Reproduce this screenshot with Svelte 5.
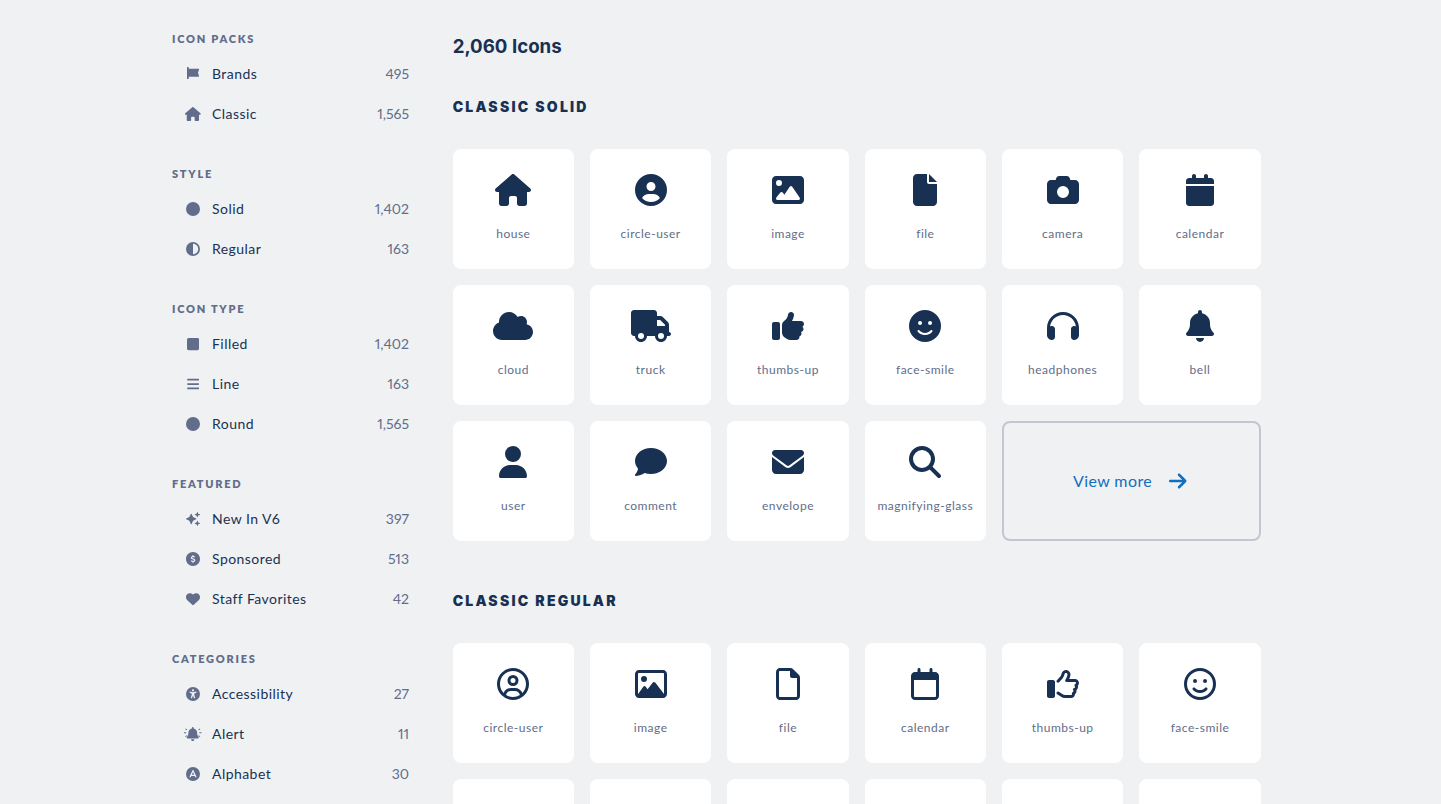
<script>
	const paths = {
		house: [576, 'M575.8 255.5c0 18-15 32.1-32 32.1h-32l.7 160.2c0 2.7-.2 5.4-.5 8.1V472c0 22.1-17.9 40-40 40H456c-1.1 0-2.2 0-3.3-.1c-1.4 .1-2.8 .1-4.2 .1H416 392c-22.1 0-40-17.9-40-40V448 384c0-17.7-14.3-32-32-32H256c-17.7 0-32 14.3-32 32v64 24c0 22.1-17.9 40-40 40H160 128.1c-1.5 0-3-.1-4.5-.2c-1.2 .1-2.4 .2-3.6 .2H104c-22.1 0-40-17.9-40-40V360c0-.9 0-1.9 .1-2.8V287.6H32c-18 0-32-14-32-32.1c0-9 3-17 10-24L266.4 8c7-7 15-8 22-8s15 2 21 7L564.8 231.5c8 7 12 15 11 24z'],
		circleUser: [512, 'M399 384.2C376.9 345.8 335.4 320 288 320H224c-47.4 0-88.9 25.8-111 64.2c35.2 39.2 86.2 63.8 143 63.8s107.8-24.7 143-63.8zM0 256a256 256 0 1 1 512 0A256 256 0 1 1 0 256zm256 16a72 72 0 1 0 0-144 72 72 0 1 0 0 144z'],
		image: [512, 'M0 96C0 60.7 28.7 32 64 32H448c35.3 0 64 28.7 64 64V416c0 35.3-28.7 64-64 64H64c-35.3 0-64-28.7-64-64V96zM323.8 202.5c-4.5-6.6-11.9-10.5-19.8-10.5s-15.4 3.9-19.8 10.5l-87 127.6L170.7 297c-4.6-5.7-11.5-9-18.7-9s-14.2 3.3-18.7 9l-64 80c-5.8 7.2-6.9 17.1-2.9 25.4s12.4 13.6 21.6 13.6h96 32H424c8.9 0 17.1-4.9 21.2-12.8s3.6-17.4-1.4-24.7l-120-176zM112 192a48 48 0 1 0 0-96 48 48 0 1 0 0 96z'],
		file: [384, 'M0 64C0 28.7 28.7 0 64 0H224V128c0 17.7 14.3 32 32 32H384V448c0 35.3-28.7 64-64 64H64c-35.3 0-64-28.7-64-64V64zm384 64H256V0L384 128z'],
		camera: [512, 'M149.1 64.8L138.7 96H64C28.7 96 0 124.7 0 160V416c0 35.3 28.7 64 64 64H448c35.3 0 64-28.7 64-64V160c0-35.3-28.7-64-64-64H373.3L362.9 64.8C356.4 45.2 338.1 32 317.4 32H194.6c-20.7 0-39 13.2-45.5 32.8zM256 192a96 96 0 1 1 0 192 96 96 0 1 1 0-192z'],
		calendar: [448, 'M96 32V64H48C21.5 64 0 85.5 0 112v48H448V112c0-26.5-21.5-48-48-48H352V32c0-17.7-14.3-32-32-32s-32 14.3-32 32V64H160V32c0-17.7-14.3-32-32-32S96 14.3 96 32zM448 192H0V464c0 26.5 21.5 48 48 48H400c26.5 0 48-21.5 48-48V192z'],
		cloud: [640, 'M0 336c0 79.5 64.5 144 144 144H512c70.7 0 128-57.3 128-128c0-61.9-44-113.6-102.4-125.4c4.1-10.7 6.4-22.4 6.4-34.6c0-53-43-96-96-96c-19.7 0-38.1 6-53.3 16.2C367 64.2 315.3 32 256 32C167.6 32 96 103.6 96 192c0 2.7 .1 5.4 .2 8.1C40.2 219.8 0 273.2 0 336z'],
		truck: [640, 'M48 0C21.5 0 0 21.5 0 48V368c0 26.5 21.5 48 48 48H64c0 53 43 96 96 96s96-43 96-96H384c0 53 43 96 96 96s96-43 96-96h32c17.7 0 32-14.3 32-32s-14.3-32-32-32V288 256 237.3c0-17-6.7-33.3-18.7-45.3L512 114.7c-12-12-28.3-18.7-45.3-18.7H416V48c0-26.5-21.5-48-48-48H48zM416 160h50.7L544 237.3V256H416V160zM112 416a48 48 0 1 1 96 0 48 48 0 1 1 -96 0zm368-48a48 48 0 1 1 0 96 48 48 0 1 1 0-96z'],
		thumbsUp: [512, 'M313.4 32.9c26 5.2 42.9 30.5 37.7 56.5l-2.3 11.4c-5.3 26.7-15.1 52.1-28.8 75.2H464c26.5 0 48 21.5 48 48c0 18.5-10.5 34.6-25.9 42.6C497 275.4 504 288.9 504 304c0 23.4-16.8 42.9-38.9 47.1c4.4 7.3 6.9 15.8 6.9 24.9c0 21.3-13.9 39.4-33.1 45.6c.7 3.3 1.1 6.8 1.1 10.4c0 26.5-21.5 48-48 48H294.5c-19 0-37.5-5.6-53.3-16.1l-38.5-25.7C176 420.4 160 390.4 160 358.3V320 272 247.1c0-29.2 13.3-56.7 36-75l7.4-5.9c26.5-21.2 44.6-51 51.2-84.2l2.3-11.4c5.2-26 30.5-42.9 56.5-37.7zM32 192H96c17.7 0 32 14.3 32 32V448c0 17.7-14.3 32-32 32H32c-17.7 0-32-14.3-32-32V224c0-17.7 14.3-32 32-32z'],
		faceSmile: [512, 'M256 512A256 256 0 1 0 256 0a256 256 0 1 0 0 512zM164.1 325.5C182 346.2 212.6 368 256 368s74-21.8 91.9-42.5c5.8-6.7 15.9-7.4 22.6-1.6s7.4 15.9 1.6 22.6C349.8 372.1 311.1 400 256 400s-93.8-27.9-116.1-53.5c-5.8-6.7-5.1-16.8 1.6-22.6s16.8-5.1 22.6 1.6zM144.4 208a32 32 0 1 1 64 0 32 32 0 1 1 -64 0zm192-32a32 32 0 1 1 0 64 32 32 0 1 1 0-64z'],
		headphones: [512, 'M256 80C149.9 80 62.4 159.4 49.6 262c9.4-3.8 19.6-6 30.4-6c26.5 0 48 21.5 48 48V432c0 26.5-21.5 48-48 48c-44.2 0-80-35.8-80-80V384 336 288C0 146.6 114.6 32 256 32s256 114.6 256 256v48 48 16c0 44.2-35.8 80-80 80c-26.5 0-48-21.5-48-48V304c0-26.5 21.5-48 48-48c10.8 0 21 2.1 30.4 6C449.6 159.4 362.1 80 256 80z'],
		bell: [448, 'M224 0c-17.7 0-32 14.3-32 32V51.2C119 66 64 130.6 64 208v18.8c0 47-17.3 92.4-48.5 127.6l-7.4 8.3c-8.4 9.4-10.4 22.9-5.3 34.4S19.4 416 32 416H416c12.6 0 24-7.4 29.2-18.9s3.1-25-5.3-34.4l-7.4-8.3C401.3 319.2 384 273.9 384 226.8V208c0-77.4-55-142-128-156.8V32c0-17.7-14.3-32-32-32zm45.3 493.3c12-12 18.7-28.3 18.7-45.3H224 160c0 17 6.7 33.3 18.7 45.3s28.3 18.7 45.3 18.7s33.3-6.7 45.3-18.7z'],
		user: [448, 'M224 256A128 128 0 1 0 224 0a128 128 0 1 0 0 256zm-45.7 48C79.8 304 0 383.8 0 482.3C0 498.7 13.3 512 29.7 512H418.3c16.4 0 29.7-13.3 29.7-29.7C448 383.8 368.2 304 269.7 304H178.3z'],
		comment: [512, 'M512 240c0 114.9-114.6 208-256 208c-37.1 0-72.3-6.4-104.1-17.9c-11.9 8.7-31.3 20.6-54.3 30.6C73.6 471.1 44.7 480 16 480c-6.5 0-12.3-3.9-14.8-9.9c-2.5-6-1.1-12.8 3.4-17.4l0 0 0 0 0 0 0 0 .3-.3c.3-.3 .7-.7 1.3-1.4c1.1-1.2 2.8-3.1 4.9-5.7c4.1-5 9.6-12.4 15.2-21.6c10-16.6 19.5-38.4 21.4-62.9C17.7 326.8 0 285.1 0 240C0 125.1 114.6 32 256 32s256 93.1 256 208z'],
		envelope: [512, 'M48 64C21.5 64 0 85.5 0 112c0 15.1 7.1 29.3 19.2 38.4L236.8 313.6c11.4 8.5 27 8.5 38.4 0L492.8 150.4c12.1-9.1 19.2-23.3 19.2-38.4c0-26.5-21.5-48-48-48H48zM0 176V384c0 35.3 28.7 64 64 64H448c35.3 0 64-28.7 64-64V176L294.4 339.2c-22.8 17.1-54 17.1-76.8 0L0 176z'],
		glass: [512, 'M416 208c0 45.9-14.9 88.3-40 122.7L502.6 457.4c12.5 12.5 12.5 32.8 0 45.3s-32.8 12.5-45.3 0L330.7 376c-34.4 25.2-76.8 40-122.7 40C93.1 416 0 322.9 0 208S93.1 0 208 0S416 93.1 416 208zM208 352a144 144 0 1 0 0-288 144 144 0 1 0 0 288z'],
		circleUserR: [512, 'M406.5 399.6C387.4 352.9 341.5 320 288 320H224c-53.5 0-99.4 32.9-118.5 79.6C69.9 362.2 48 311.7 48 256C48 141.1 141.1 48 256 48s208 93.1 208 208c0 55.7-21.9 106.2-57.5 143.6zm-40.1 32.7C334.4 452.4 296.6 464 256 464s-78.4-11.6-110.5-31.7c7.3-36.7 39.7-64.3 78.5-64.3h64c38.8 0 71.2 27.6 78.5 64.3zM256 512A256 256 0 1 0 256 0a256 256 0 1 0 0 512zm0-272a40 40 0 1 1 0-80 40 40 0 1 1 0 80zm-88-40a88 88 0 1 0 176 0 88 88 0 1 0 -176 0z'],
		imageR: [512, 'M448 80c8.8 0 16 7.2 16 16V415.8l-5-6.5-136-176c-4.5-5.9-11.6-9.3-19-9.3s-14.4 3.4-19 9.3L202 340.7l-30.5-42.7C167 291.7 159.8 288 152 288s-15 3.7-19.5 10.1l-80 112L48 416.3l0-.3V96c0-8.8 7.2-16 16-16H448zM64 32C28.7 32 0 60.7 0 96V416c0 35.3 28.7 64 64 64H448c35.3 0 64-28.7 64-64V96c0-35.3-28.7-64-64-64H64zm80 192a48 48 0 1 0 0-96 48 48 0 1 0 0 96z'],
		fileR: [384, 'M320 464c8.8 0 16-7.2 16-16V160H256c-17.7 0-32-14.3-32-32V48H64c-8.8 0-16 7.2-16 16V448c0 8.8 7.2 16 16 16H320zM0 64C0 28.7 28.7 0 64 0H229.5c17 0 33.3 6.7 45.3 18.7l90.5 90.5c12 12 18.7 28.3 18.7 45.3V448c0 35.3-28.7 64-64 64H64c-35.3 0-64-28.7-64-64V64z'],
		calendarR: [448, 'M152 24c0-13.3-10.7-24-24-24s-24 10.7-24 24V64H64C28.7 64 0 92.7 0 128v16 48V448c0 35.3 28.7 64 64 64H384c35.3 0 64-28.7 64-64V192 144 128c0-35.3-28.7-64-64-64H344V24c0-13.3-10.7-24-24-24s-24 10.7-24 24V64H152V24zM48 192H400V448c0 8.8-7.2 16-16 16H64c-8.8 0-16-7.2-16-16V192z'],
		thumbsUpR: [512, 'M323.8 34.8c-38.2-10.9-78.1 11.2-89 49.4l-5.7 20c-3.7 13-10.4 25-19.5 35l-51.3 56.4c-8.9 9.8-8.2 25 1.6 33.9s25 8.2 33.9-1.6l51.3-56.4c14.1-15.5 24.4-34 30.1-54.1l5.7-20c3.6-12.7 16.9-20.1 29.7-16.5s20.1 16.9 16.5 29.7l-5.7 20c-5.7 19.9-14.7 38.7-26.6 55.5c-5.2 7.3-5.8 16.9-1.7 24.9s12.3 13 21.3 13L448 224c8.8 0 16 7.2 16 16c0 6.8-4.3 12.7-10.4 15c-7.4 2.8-13 9-14.9 16.7s.1 15.8 5.3 21.7c2.5 2.8 4 6.5 4 10.6c0 7.8-5.6 14.3-13 15.7c-8.2 1.6-15.1 7.3-18 15.2s-1.6 16.7 3.6 23.3c2.1 2.7 3.4 6.1 3.4 9.9c0 6.7-4.2 12.6-10.2 14.9c-11.5 4.5-17.7 16.9-14.4 28.8c.4 1.3 .6 2.8 .6 4.3c0 8.8-7.2 16-16 16H286.5c-12.6 0-25-3.7-35.5-10.7l-61.7-41.1c-11-7.4-25.9-4.4-33.3 6.7s-4.4 25.9 6.7 33.3l61.7 41.1c18.4 12.3 40 18.8 62.1 18.8H384c34.7 0 62.9-27.6 64-62c14.6-11.7 24-29.7 24-50c0-4.5-.5-8.8-1.3-13c15.4-11.7 25.3-30.2 25.3-51c0-6.5-1-12.8-2.8-18.7C504.8 273.7 512 257.7 512 240c0-35.3-28.6-64-64-64l-92.3 0c4.7-10.4 8.7-21.2 11.8-32.2l5.7-20c10.9-38.2-11.2-78.1-49.4-89zM32 192c-17.7 0-32 14.3-32 32V448c0 17.7 14.3 32 32 32H96c17.7 0 32-14.3 32-32V224c0-17.7-14.3-32-32-32H32z'],
		faceSmileR: [512, 'M464 256A208 208 0 1 0 48 256a208 208 0 1 0 416 0zM0 256a256 256 0 1 1 512 0A256 256 0 1 1 0 256zm177.6 62.1C192.8 334.5 218.8 352 256 352s63.2-17.5 78.4-33.9c9-9.7 24.2-10.4 33.9-1.4s10.4 24.2 1.4 33.9c-22 23.8-60 49.4-113.6 49.4s-91.7-25.5-113.6-49.4c-9-9.7-8.4-24.9 1.4-33.9s24.9-8.4 33.9 1.4zM144.4 208a32 32 0 1 1 64 0 32 32 0 1 1 -64 0zm192-32a32 32 0 1 1 0 64 32 32 0 1 1 0-64z'],
		// sidebar
		flag: [448, 'M0 16C0 7 7 0 16 0h32c9 0 16 7 16 16v48h360c14 0 24 8 20 20l-44 124 44 124c4 12-6 20-20 20H64v88H0z'],
		circle: [512, 'M256 512A256 256 0 1 0 256 0a256 256 0 1 0 0 512z'],
		half: [512, 'M448 256c0-106-86-192-192-192V448c106 0 192-86 192-192zM0 256a256 256 0 1 1 512 0A256 256 0 1 1 0 256z'],
		square: [448, 'M0 96C0 60.7 28.7 32 64 32H384c35.3 0 64 28.7 64 64V416c0 35.3-28.7 64-64 64H64c-35.3 0-64-28.7-64-64V96z'],
		bars: [448, 'M0 96C0 78.3 14.3 64 32 64H416c17.7 0 32 14.3 32 32s-14.3 32-32 32H32C14.3 128 0 113.7 0 96zM0 256c0-17.7 14.3-32 32-32H416c17.7 0 32 14.3 32 32s-14.3 32-32 32H32c-17.7 0-32-14.3-32-32zM448 416c0 17.7-14.3 32-32 32H32c-17.7 0-32-14.3-32-32s14.3-32 32-32H416c17.7 0 32 14.3 32 32z'],
		sparkles: [512, 'M327.5 85.2c-4.5 1.7-7.5 6-7.5 10.8s3 9.1 7.5 10.8L384 128l21.2 56.5c1.7 4.5 6 7.5 10.8 7.5s9.1-3 10.8-7.5L448 128l56.5-21.2c4.5-1.7 7.5-6 7.5-10.8s-3-9.1-7.5-10.8L448 64 426.8 7.5C425.1 3 420.8 0 416 0s-9.1 3-10.8 7.5L384 64 327.5 85.2zM205.1 73.3c-2.6-5.7-8.3-9.3-14.5-9.3s-11.9 3.6-14.5 9.3L123.3 187.3 9.3 240C3.6 242.6 0 248.3 0 254.6s3.6 11.9 9.3 14.5l114.1 52.7L176 435.8c2.6 5.7 8.3 9.3 14.5 9.3s11.9-3.6 14.5-9.3l52.7-114.1 114.1-52.7c5.7-2.6 9.3-8.3 9.3-14.5s-3.6-11.9-9.3-14.5L257.8 187.4 205.1 73.3zM384 384l-56.5 21.2c-4.5 1.7-7.5 6-7.5 10.8s3 9.1 7.5 10.8L384 448l21.2 56.5c1.7 4.5 6 7.5 10.8 7.5s9.1-3 10.8-7.5L448 448l56.5-21.2c4.5-1.7 7.5-6 7.5-10.8s-3-9.1-7.5-10.8L448 384l-21.2-56.5c-1.7-4.5-6-7.5-10.8-7.5s-9.1 3-10.8 7.5L384 384z'],
		dollar: [512, 'M512 256c0 141.4-114.6 256-256 256S0 397.4 0 256S114.6 0 256 0S512 114.6 512 256zM276.8 133.6v14.2c9.7 1.2 19.4 3.9 29 6.6c1.9 .5 3.7 1 5.6 1.6c11.5 3.2 18.3 15.1 15.1 26.6s-15.1 18.2-26.6 15.1c-1.6-.4-3.1-.9-4.7-1.3c-7-2-14-3.9-21.1-5.3c-13.2-2.5-28.5-1.3-40.8 4c-11 4.8-20.1 16.4-7.6 24.4c9.8 6.3 21.8 9.5 33.2 12.6c2.4 .6 4.7 1.3 7 1.9c15.6 4.4 35.5 10.1 50.4 20.3c19.4 13.3 28.5 34.9 24.2 58.1c-4.1 22.4-19.7 37.1-38.4 44.7c-7.8 3.2-16.3 5.2-25.2 6.2l0 15.2c0 11.9-9.7 21.6-21.6 21.6s-21.6-9.7-21.6-21.6l0-17.4c-14.4-3.3-28.5-7.8-42.6-12.5c-11.3-3.7-17.5-16-13.7-27.3s16-17.5 27.3-13.7c2.5 .8 5 1.7 7.5 2.5c11.3 3.8 22.9 7.7 34.5 9.6c17 2.5 30.6 1 39.5-2.6c12-4.8 17.7-19.1 5.9-27.1c-10.1-6.9-22.6-10.3-34.5-13.5c-2.3-.6-4.5-1.2-6.8-1.9c-15.1-4.3-34-9.6-48.2-18.7c-19.5-12.5-29.4-33.3-25.2-56.4c4-21.8 21-36.3 39-44.1c5.5-2.4 11.4-4.3 17.5-5.7V133.6c0-11.9 9.7-21.6 21.6-21.6s21.6 9.7 21.6 21.6z'],
		heart: [512, 'M47.6 300.4L228.3 469.1c7.5 7 17.4 10.9 27.7 10.9s20.2-3.9 27.7-10.9L464.4 300.4c30.4-28.3 47.6-68 47.6-109.5v-5.8c0-69.9-50.5-129.5-119.4-141C347 36.5 300.6 51.4 268 84L256 96 244 84c-32.6-32.6-79-47.5-124.6-39.9C50.5 55.6 0 115.2 0 185.1v5.8c0 41.5 17.2 81.2 47.6 109.5z'],
		access: [512, 'M0 256a256 256 0 1 1 512 0A256 256 0 1 1 0 256zm161.5-86.1c-12.2-5.2-26.3 .4-31.5 12.6s.4 26.3 12.6 31.5l11.9 5.1c17.3 7.4 35.2 12.9 53.6 16.3v50.1c0 4.3-.7 8.6-2.1 12.6l-28.7 86.1c-4.2 12.6 2.6 26.2 15.2 30.4s26.2-2.6 30.4-15.2l24.4-73.2c1.3-3.8 4.8-6.4 8.8-6.4s7.6 2.6 8.8 6.4l24.4 73.2c4.2 12.6 17.8 19.4 30.4 15.2s19.4-17.8 15.2-30.4l-28.7-86.1c-1.4-4.1-2.1-8.3-2.1-12.6V235.5c18.4-3.5 36.3-8.9 53.6-16.3l11.9-5.1c12.2-5.2 17.8-19.3 12.6-31.5s-19.3-17.8-31.5-12.6L338.7 175c-26.1 11.2-54.2 17-82.7 17s-56.5-5.8-82.7-17l-11.9-5.1zM256 160a40 40 0 1 0 0-80 40 40 0 1 0 0 80z'],
		bellOn: [640, 'M320 0c-17.7 0-32 14.3-32 32v19.2C215 66 160 130.6 160 208v18.8c0 47-17.3 92.4-48.5 127.6l-7.4 8.3c-8.4 9.4-10.4 22.9-5.3 34.4S115.4 416 128 416h384c12.6 0 24-7.4 29.2-18.9s3.1-25-5.3-34.4l-7.4-8.3C497.3 319.2 480 273.9 480 226.8V208c0-77.4-55-142-128-156.8V32c0-17.7-14.3-32-32-32zm45.3 493.3c12-12 18.7-28.3 18.7-45.3h-128c0 17 6.7 33.3 18.7 45.3s28.3 18.7 45.3 18.7s33.3-6.7 45.3-18.7zM60 56l60 36-16 28-60-36zM580 56l16 28-60 36-16-28zM0 192h80v32H0zM560 192h80v32h-80zM104 300l16 28-60 36-16-28zM536 300l60 36-16 28-60-36z'],
		circleA: [512, 'M256 512A256 256 0 1 0 256 0a256 256 0 1 0 0 512zm0-400c9 0 17.5 5.5 21.5 14l102 224c5.5 12-.5 26-12.5 31.5s-26-.5-31.5-12.5L319 333H193l-16.5 36c-5.5 12-19.5 18-31.5 12.5S127 362 132.5 350l102-224c4-8.5 12.5-14 21.5-14zm0 71l-41 102h82z'],
		arrow: [448, 'M438.6 278.6c12.5-12.5 12.5-32.8 0-45.3l-160-160c-12.5-12.5-32.8-12.5-45.3 0s-12.5 32.8 0 45.3L338.8 224 32 224c-17.7 0-32 14.3-32 32s14.3 32 32 32l306.7 0L233.4 393.4c-12.5 12.5-12.5 32.8 0 45.3s32.8 12.5 45.3 0l160-160z']
	};

	const groups = [
		{ title: 'Icon Packs', items: [['flag', 'Brands', '495'], ['house', 'Classic', '1,565']] },
		{ title: 'Style', items: [['circle', 'Solid', '1,402'], ['half', 'Regular', '163']] },
		{ title: 'Icon Type', items: [['square', 'Filled', '1,402'], ['bars', 'Line', '163'], ['circle', 'Round', '1,565']] },
		{ title: 'Featured', items: [['sparkles', 'New In V6', '397'], ['dollar', 'Sponsored', '513'], ['heart', 'Staff Favorites', '42']] },
		{ title: 'Categories', items: [['access', 'Accessibility', '27'], ['bellOn', 'Alert', '11'], ['circleA', 'Alphabet', '30']] }
	];

	const solid = [
		['house', 'house'], ['circleUser', 'circle-user'], ['image', 'image'], ['file', 'file'], ['camera', 'camera'], ['calendar', 'calendar'],
		['cloud', 'cloud'], ['truck', 'truck'], ['thumbsUp', 'thumbs-up'], ['faceSmile', 'face-smile'], ['headphones', 'headphones'], ['bell', 'bell'],
		['user', 'user'], ['comment', 'comment'], ['envelope', 'envelope'], ['glass', 'magnifying-glass']
	];

	const regular = [
		['circleUserR', 'circle-user'], ['imageR', 'image'], ['fileR', 'file'], ['calendarR', 'calendar'], ['thumbsUpR', 'thumbs-up'], ['faceSmileR', 'face-smile']
	];
</script>

{#snippet icon(name, size)}
	<svg viewBox="0 0 {paths[name][0]} 512" height={size} width={(paths[name][0] / 512) * size} fill="currentColor">
		<path fill-rule="evenodd" d={paths[name][1]} />
	</svg>
{/snippet}

<div class="page">
	<aside class="sidebar">
		{#each groups as group}
			<section class="group">
				<h3>{group.title}</h3>
				{#each group.items as [ic, label, count]}
					<div class="row">
						<span class="row-icon">{@render icon(ic, 14)}</span>
						<span class="row-label">{label}</span>
						<span class="row-count">{count}</span>
					</div>
				{/each}
			</section>
		{/each}
	</aside>

	<main class="content">
		<h1>2,060 Icons</h1>

		<h2>Classic Solid</h2>
		<div class="grid">
			{#each solid as [ic, label]}
				<div class="card">
					<span class="card-icon">{@render icon(ic, 32)}</span>
					<span class="card-label">{label}</span>
				</div>
			{/each}
			<div class="more">
				<span class="more-label">View more</span>
				{@render icon('arrow', 20)}
			</div>
		</div>

		<h2 class="second">Classic Regular</h2>
		<div class="grid">
			{#each regular as [ic, label]}
				<div class="card">
					<span class="card-icon">{@render icon(ic, 32)}</span>
					<span class="card-label">{label}</span>
				</div>
			{/each}
			<!-- next row runs off the bottom of the page -->
			{#each Array(6) as _}
				<div class="card"></div>
			{/each}
		</div>
	</main>
</div>

<style>
	:global(body) {
		background: #f0f1f3;
		overflow: hidden;
	}

	.page {
		display: flex;
		gap: 43.67px;
		height: 804px;
		overflow: hidden;
		padding-left: 172px;
		color: #183153;
		font-family: Lato, "Open Sans", sans-serif;
	}

	svg {
		display: block;
	}

	.sidebar {
		flex: 0 0 237px;
		padding-top: 31px;
	}

	.group {
		margin-bottom: 32px;
	}

	h3 {
		margin: 0 0 7px;
		font-size: 11px;
		font-weight: 800;
		line-height: 16px;
		letter-spacing: 1.75px;
		text-transform: uppercase;
		color: #616d8a;
	}

	.row {
		display: flex;
		align-items: center;
		height: 40px;
		padding-left: 12px;
		font-size: 14px;
	}

	.row-icon {
		display: flex;
		justify-content: center;
		width: 18px;
		margin-right: 10px;
		color: #616d8a;
	}

	.row-label {
		flex: 1;
		padding-bottom: 2px;
		letter-spacing: 0.45px;
	}

	.row-count {
		padding-bottom: 2px;
		color: #616d8a;
		font-variant-numeric: proportional-nums;
	}

	.content {
		flex: 0 0 808px;
		padding-top: 33px;
	}

	h1 {
		margin: 0 0 36px;
		font-family: Inter, sans-serif;
		font-size: 18.7px;
		font-weight: 700;
		line-height: 28px;
	}

	h2 {
		margin: 0 0 32px;
		font-family: Inter, sans-serif;
		font-size: 14px;
		font-weight: 900;
		line-height: 20px;
		letter-spacing: 2.2px;
		text-transform: uppercase;
	}

	h2.second {
		margin-top: 50px;
	}

	.grid {
		display: grid;
		grid-template-columns: repeat(6, 1fr);
		gap: 16px;
	}

	.card {
		display: flex;
		flex-direction: column;
		align-items: center;
		height: 120px;
		padding-top: 25px;
		box-sizing: border-box;
		background: #fff;
		border-radius: 8px;
	}

	.card-icon {
		height: 32px;
	}

	.card-label {
		margin-top: 19px;
		font-size: 12px;
		line-height: 18px;
		letter-spacing: 0.5px;
		color: #616d8a;
	}

	.more {
		grid-column: span 2;
		display: flex;
		align-items: center;
		justify-content: center;
		gap: 17px;
		padding-right: 3px;
		border: 2px solid #c3c6d1;
		border-radius: 8px;
		font-size: 16px;
		letter-spacing: 0.4px;
		color: #146ebe;
	}

	.more-label {
		padding-bottom: 2px;
	}
</style>
